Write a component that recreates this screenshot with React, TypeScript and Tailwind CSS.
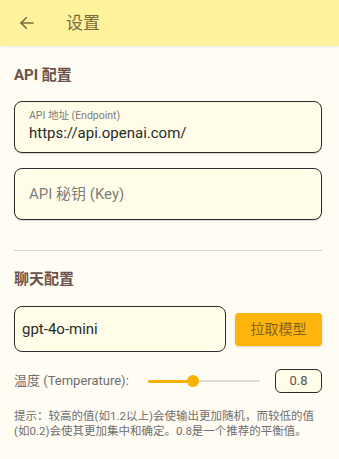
import React, { useState } from 'react';

const font = { fontFamily: 'Roboto, "Noto Sans CJK SC", sans-serif' };

const App: React.FC = () => {
  const [temp] = useState(0.8);
  const pct = ((temp - 0) / 2) * 100;

  return (
    <div className="w-[339px] h-[459px] bg-[#fffcf4] overflow-hidden" style={font}>
      {/* Top bar */}
      <header className="h-[46px] bg-[#fff29c] flex items-center shadow-[0_1px_2px_rgba(0,0,0,0.08)]">
        <button className="ml-[16px] w-[22px] h-[22px] flex items-center justify-center text-[#7a6a3c]" aria-label="返回">
          <svg width="18" height="18" viewBox="0 0 24 24" fill="none" stroke="currentColor" strokeWidth="2.2" strokeLinecap="round" strokeLinejoin="round">
            <path d="M20 12H4" />
            <path d="M11 5l-7 7 7 7" />
          </svg>
        </button>
        <h1 className="ml-[28px] text-[17px] text-[#7a6a3c] leading-none">设置</h1>
      </header>

      <main className="pl-[14px] pr-[17px]">
        {/* API section */}
        <h2 className="mt-[20px] text-[15px] font-bold text-[#6d5148] leading-[18px]">API 配置</h2>

        <div className="mt-[17px] h-[52px] rounded-[8px] border-[1.5px] border-[#2b2b2b] bg-[#fffde8] px-[14px] pt-[7px] shadow-[0_1px_1px_rgba(0,0,0,0.15)]">
          <div className="text-[10.5px] text-[#7b7b7b] leading-[13px]">API 地址 (Endpoint)</div>
          <div className="mt-[2px] text-[15px] text-[#2a2a2a] leading-[19px]">https://api.openai.com/</div>
        </div>

        <div className="mt-[15px] h-[52px] rounded-[8px] border-[1.5px] border-[#2b2b2b] bg-[#fffde8] px-[14px] flex items-center shadow-[0_1px_1px_rgba(0,0,0,0.15)]">
          <span className="text-[15px] text-[#7d7d7d]">API 秘钥 (Key)</span>
        </div>

        <div className="mt-[30px] h-px bg-[#d8d6d0]" />

        {/* Chat section */}
        <h2 className="mt-[19px] text-[15px] font-bold text-[#6d5148] leading-[18px]">聊天配置</h2>

        <div className="mt-[18px] flex items-center gap-[9px]">
          <div className="flex-1 h-[46px] rounded-[8px] border-[1.5px] border-[#2b2b2b] bg-[#fffde8] px-[7px] flex items-center">
            <span className="text-[15px] text-[#2a2a2a]">gpt-4o-mini</span>
          </div>
          <button className="w-[87px] h-[33px] rounded-[4px] bg-[#fdb40d] text-[14px] text-[#85631f] shadow-[0_1px_2px_rgba(0,0,0,0.15)]">
            拉取模型
          </button>
        </div>

        {/* Temperature */}
        <div className="mt-[17px] flex items-center h-[24px]">
          <span className="text-[13px] text-[#6f6f6f] w-[134px]">温度 (Temperature):</span>
          <div className="relative w-[112px] h-[14px] flex items-center">
            <div className="w-full h-[2px] bg-[#dcdad4] rounded-full" />
            <div className="absolute left-0 h-[3px] bg-[#f7b100] rounded-full" style={{ width: `${pct}%` }} />
            <div
              className="absolute w-[12px] h-[12px] rounded-full bg-[#f7b100] -translate-x-1/2"
              style={{ left: `${pct}%` }}
            />
          </div>
          <div className="ml-auto w-[47px] h-[24px] rounded-[6px] border-[1.5px] border-[#2b2b2b] bg-[#fffde8] flex items-center justify-center">
            <span className="text-[13px] text-[#555]">0.8</span>
          </div>
        </div>

        <p className="mt-[16px] text-[11.5px] leading-[15px] text-[#6f6f6f]">
          提示：较高的值(如1.2以上)会使输出更加随机，而较低的值(如0.2)会使其更加集中和确定。0.8是一个推荐的平衡值。
        </p>
      </main>
    </div>
  );
};

export default App;
